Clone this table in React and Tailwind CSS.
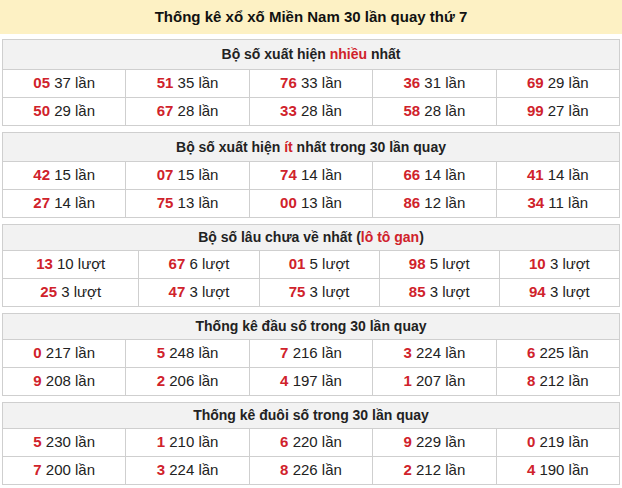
const sections = [
  {
    head: "h-[30px]",
    title: (
      <>
        Bộ số xuất hiện <span className="text-[#d0222b]">nhiều</span> nhất
      </>
    ),
    rows: [
      [["05", "37 lần"], ["51", "35 lần"], ["76", "33 lần"], ["36", "31 lần"], ["69", "29 lần"]],
      [["50", "29 lần"], ["67", "28 lần"], ["33", "28 lần"], ["58", "28 lần"], ["99", "27 lần"]],
    ],
  },
  {
    head: "h-[29px]",
    title: (
      <>
        Bộ số xuất hiện <span className="text-[#d0222b]">ít</span> nhất trong 30 lần quay
      </>
    ),
    rows: [
      [["42", "15 lần"], ["07", "15 lần"], ["74", "14 lần"], ["66", "14 lần"], ["41", "14 lần"]],
      [["27", "14 lần"], ["75", "13 lần"], ["00", "13 lần"], ["86", "12 lần"], ["34", "11 lần"]],
    ],
  },
  {
    head: "h-[26px]",
    title: (
      <>
        Bộ số lâu chưa về nhất (<span className="text-[#d0222b]">lô tô gan</span>)
      </>
    ),
    rows: [
      [["13", "10 lượt"], ["67", "6 lượt"], ["01", "5 lượt"], ["98", "5 lượt"], ["10", "3 lượt"]],
      [["25", "3 lượt"], ["47", "3 lượt"], ["75", "3 lượt"], ["85", "3 lượt"], ["94", "3 lượt"]],
    ],
  },
  {
    head: "h-[26px]",
    title: "Thống kê đầu số trong 30 lần quay",
    rows: [
      [["0", "217 lần"], ["5", "248 lần"], ["7", "216 lần"], ["3", "224 lần"], ["6", "225 lần"]],
      [["9", "208 lần"], ["2", "206 lần"], ["4", "197 lần"], ["1", "207 lần"], ["8", "212 lần"]],
    ],
  },
  {
    head: "h-[26px]",
    title: "Thống kê đuôi số trong 30 lần quay",
    rows: [
      [["5", "230 lần"], ["1", "210 lần"], ["6", "220 lần"], ["9", "229 lần"], ["0", "219 lần"]],
      [["7", "200 lần"], ["3", "224 lần"], ["8", "226 lần"], ["2", "212 lần"], ["4", "190 lần"]],
    ],
  },
];

function StatTable({ title, rows, head }) {
  return (
    <table className="w-full table-auto border-collapse border border-[#cfcfcf] mt-[6px] first:mt-[5px]">
      <thead>
        <tr>
          <th
            colSpan={5}
            className={`${head} bg-[#f2f2f2] border border-[#cfcfcf] text-[14px] font-bold text-[#222] text-center`}
          >
            {title}
          </th>
        </tr>
      </thead>
      <tbody>
        {rows.map((row, i) => (
          <tr key={i}>
            {row.map(([num, count], j) => (
              <td
                key={j}
                className="h-[28px] border border-[#cfcfcf] text-center text-[15px] text-[#222] whitespace-nowrap"
              >
                <span className="font-bold text-[#d0222b]">{num}</span> {count}
              </td>
            ))}
          </tr>
        ))}
      </tbody>
    </table>
  );
}

export default function App() {
  return (
    <div className="w-[622px] h-[488px] bg-white font-['Liberation_Sans',Arial,sans-serif] overflow-hidden">
      <div className="h-[34px] bg-[#fdf1c4] flex items-center justify-center text-[15px] font-bold text-[#111]">
        Thống kê xổ xố Miền Nam 30 lần quay thứ 7
      </div>
      <div className="px-[2px] flex flex-col">
        {sections.map((s, i) => (
          <StatTable key={i} title={s.title} rows={s.rows} head={s.head} />
        ))}
      </div>
    </div>
  );
}
